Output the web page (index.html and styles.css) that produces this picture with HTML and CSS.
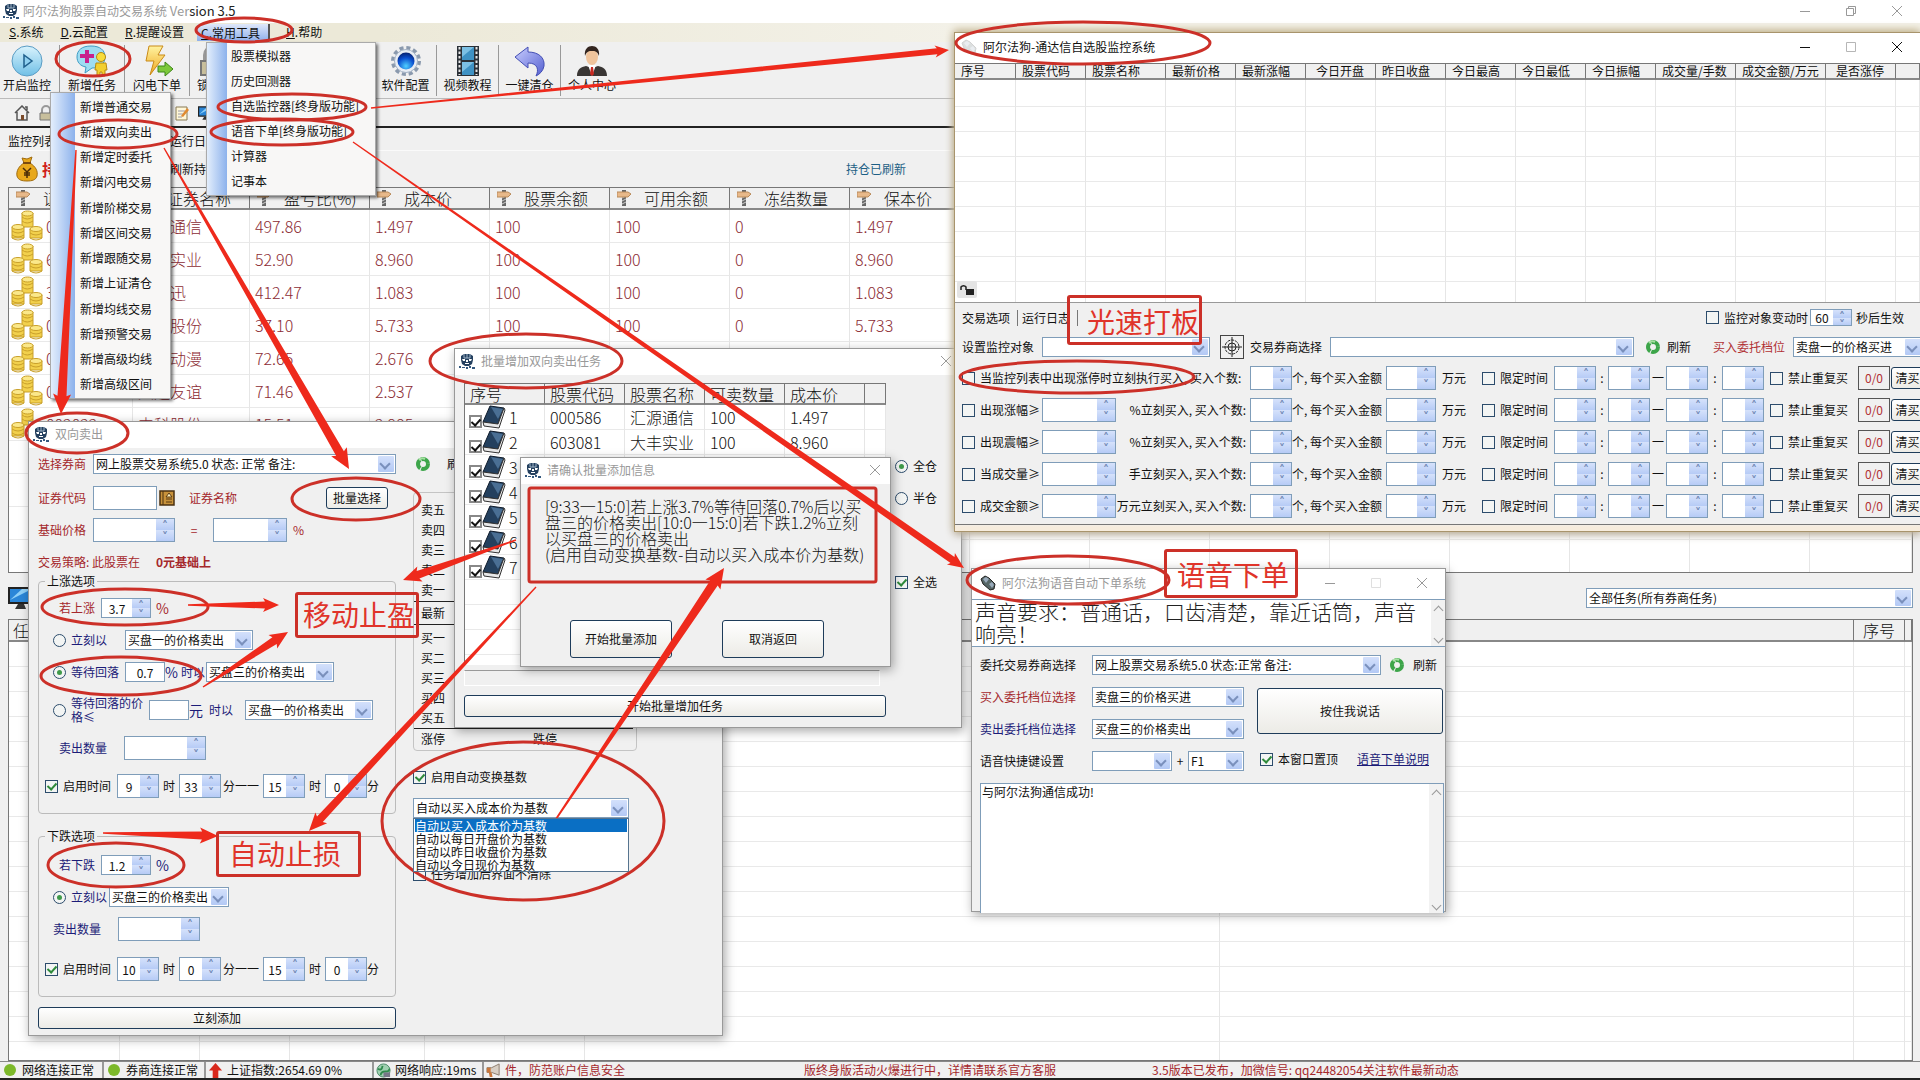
FILE: index.html
```html
<!DOCTYPE html>
<html lang="zh-CN">
<head>
  <meta charset="UTF-8">
  <meta name="viewport" content="width=device-width, initial-scale=1.0">
  <title>阿尔法狗股票自动交易系统</title>
  <link rel="stylesheet" href="styles.css">
</head>
<body>

  <!-- Icônes partagées -->
  <svg width="0" height="0" class="sprite" aria-hidden="true">
    <linearGradient id="gPlay" x1="0" y1="0" x2="0" y2="1"><stop offset="0" stop-color="#d9f3fd"/><stop offset="1" stop-color="#6fbfe6"/></linearGradient>
    <linearGradient id="gBolt" x1="0" y1="0" x2="0" y2="1"><stop offset="0" stop-color="#fff3a0"/><stop offset="1" stop-color="#f0a820"/></linearGradient>
    <radialGradient id="gBall" cx=".5" cy=".8" r=".8"><stop offset="0" stop-color="#4fd0ff"/><stop offset=".6" stop-color="#0a4fd0"/><stop offset="1" stop-color="#06206e"/></radialGradient>
    <linearGradient id="gBack" x1="0" y1="0" x2="1" y2="1"><stop offset="0" stop-color="#c9ceff"/><stop offset="1" stop-color="#5560d0"/></linearGradient>
    <symbol id="logo" viewBox="0 0 16 16"><path d="M2 3l3-2h6l3 2v4l-1 4-3 2H6l-3-2-1-4z" fill="#24405f"/><path d="M5 1v4h6V1M8 1v4" stroke="#9fb4c8" fill="none"/><path d="M3 6h3v2H4zM10 6h3l-1 2h-2zM6 10h4v1H6zM7 7h2v2H7z" fill="#fff"/><path d="M0 13h2v2H0zM3 14h3v1H3zM7 14h2v2H7zM10 13h2v2h-2zM13 14h3v2h-3z" fill="#35597f"/></symbol>
    <symbol id="play" viewBox="0 0 32 32"><circle cx="16" cy="16" r="15" fill="url(#gPlay)" stroke="#5a9cc4"/><path d="M13 10l8 6-8 6z" fill="#8fd0f0" stroke="#1f5f8c" stroke-width="1.5"/></symbol>
    <symbol id="task" viewBox="0 0 32 32"><path d="M15 1c9 0 14 4 14 11s-5 11-13 11l-7 5 1-6C4 21 1 17 1 12 1 5 6 1 15 1z" fill="#9fdcf2" stroke="#3d9cc4"/><path d="M9 5h4v4h5v4h-5v5H9v-5H4V9h5z" fill="#c8208c"/><circle cx="25" cy="12" r="4.500" fill="#f7dc3c" stroke="#b88a10"/><path d="M20 18h10l1 7h-2v6h-3v-4h-2v4h-3v-6h-2z" fill="#f2cf30" stroke="#b88a10"/></symbol>
    <symbol id="bolt" viewBox="0 0 32 32"><path d="M8 1h14l-5 9h7L9 30l4-14H5z" fill="url(#gBolt)" stroke="#c98a18"/><path d="M17 21h7v-4l8 7-8 7v-4h-7z" fill="#7cc83a" stroke="#3d8618"/></symbol>
    <symbol id="gear" viewBox="0 0 32 32"><circle cx="16" cy="16" r="13" fill="none" stroke="#8a99ad" stroke-width="4" stroke-dasharray="4 2.800"/><circle cx="16" cy="16" r="11.500" fill="#e8edf4" stroke="#a4b2c4"/><circle cx="16" cy="16" r="8.500" fill="url(#gBall)"/></symbol>
    <symbol id="film" viewBox="0 0 32 32"><path d="M5 1h22v30H5z" fill="#2b3138"/><path d="M10 2h12v13H10zM10 17h12v13H10z" fill="#3f92c4"/><path d="M10 2h12L10 12zM10 17h12L10 27z" fill="#7cc0e4"/><path d="M7.500 2v28M24.500 2v28" stroke="#e8e8e8" stroke-width="2" stroke-dasharray="2.500 2"/></symbol>
    <symbol id="back" viewBox="0 0 32 32"><path d="M1 12L14 2v5c11 0 17 6 16 14-1 5-4 8-8 10 3-6 2-13-8-13v5z" fill="url(#gBack)" stroke="#444fb4"/></symbol>
    <symbol id="man" viewBox="0 0 32 32"><path d="M1 31c0-7 4-9 9-10l6 2 6-2c5 1 9 3 9 10z" fill="#3a3634"/><path d="M12 20h8l-4 11z" fill="#fff"/><path d="M15 22h2l1 7-2 2-2-2z" fill="#c82820"/><ellipse cx="16" cy="12" rx="6" ry="8" fill="#f0c49c"/><path d="M9 11C8 4 12 1 16 1s8 3 7 10c-2-5-4-5-7-5s-5 0-7 5z" fill="#33251f"/></symbol>
    <symbol id="home" viewBox="0 0 16 16"><path d="M1 8l7-7 7 7M3 7v8h10V7M11 2h2v3" fill="#eee" stroke="#555" stroke-width="1.500"/><path d="M7 10h3v5H7z" fill="#7a4a2a"/></symbol>
    <symbol id="lock" viewBox="0 0 16 16"><path d="M4 8V5a4 4 0 018 0v3" fill="none" stroke="#999" stroke-width="2"/><path d="M2 8h12v7H2z" fill="#c8bf9c" stroke="#777"/></symbol>
    <symbol id="note" viewBox="0 0 16 16"><path d="M2 2h11v13H2z" fill="#fff7d8" stroke="#887a55"/><path d="M4 6h7M4 9h5M4 12h4" stroke="#99a"/><path d="M7 11l6-8 2 2-6 7z" fill="#e08a30"/></symbol>
    <symbol id="screen" viewBox="0 0 26 24"><path d="M1 2h24v15H1z" fill="#2a86d8" stroke="#222" stroke-width="2"/><path d="M2 14L14 3h10z" fill="#8fd0f8"/><path d="M10 18h6l2 5H7z" fill="#333"/></symbol>
    <symbol id="bag" viewBox="0 0 24 26"><path d="M9 7L7 2l5 1 5-2-2 6c6 4 8 8 7 13-1 4-5 5-10 5S3 24 2 20C1 15 4 10 9 7z" fill="#e8a81c" stroke="#a06c10"/><path d="M8 7h8" stroke="#7a4a10" stroke-width="2"/><path d="M8 12l4 4 4-4M12 16v6M9 17h6M9 19h6" stroke="#4a2c08" fill="none" stroke-width="1.500"/></symbol>
    <symbol id="coins" viewBox="0 0 32 32"><g fill="#f2d04c" stroke="#c9a02a"><path d="M11 3v14h11V3z"/><path d="M1 17v11h12V17zM19 19v9h12v-9z"/><ellipse cx="16.500" cy="3.500" rx="5.500" ry="2.500" fill="#fbe88a"/><ellipse cx="7" cy="17" rx="6" ry="2.500" fill="#fbe88a"/><ellipse cx="25" cy="19" rx="6" ry="2.500" fill="#fbe88a"/><path d="M11 7q5 4 11 0M11 11q5 4 11 0M1 21q6 4 12 0M1 25q6 4 12 0M1 28q6 4 12 0M19 23q6 4 12 0M19 28q6 4 12 0" fill="none"/></g></symbol>
    <symbol id="sign" viewBox="0 0 14 18"><path d="M5 1h4v16H5z" fill="#666"/><path d="M5 9l4-2M5 12l4-2M5 15l4-2" stroke="#ccc"/><path d="M0 3h11l3 2-3 3H0z" fill="#e8b98a" stroke="#b98a5a"/></symbol>
    <symbol id="book" viewBox="0 0 24 24"><path d="M8 1l14 2-6 16-15-2z" fill="#24405e" stroke="#101c2c"/><path d="M9 2l12 2-5 10z" fill="#4a6f94"/><path d="M1 17l15 2 6-16 1 2-6 18L2 21z" fill="#e8e8e8" stroke="#333"/></symbol>
    <symbol id="reload" viewBox="0 0 16 16"><circle cx="8" cy="8" r="5" fill="none" stroke="#3da54a" stroke-width="4" stroke-dasharray="9.500 1"/><path d="M4 4a5 5 0 016-1" stroke="#a4e0a0" stroke-width="2" fill="none"/></symbol>
    <symbol id="aim" viewBox="0 0 20 20"><g fill="none" stroke="#222"><circle cx="10" cy="10" r="7" stroke-dasharray="3 1"/><circle cx="10" cy="10" r="4"/><path d="M10 0v20M0 10h20"/></g></symbol>
    <symbol id="mic" viewBox="0 0 16 16"><path d="M1 4l4-3 4 2 6 6-1 5-4 1-7-6z" fill="#566" stroke="#222"/><path d="M3 4l3-2 3 2-3 4zM9 9l3-2 2 3-2 3z" fill="#9ab"/></symbol>
    <symbol id="dial" viewBox="0 0 16 16"><path d="M1 1h14v14H1z" fill="#c8923a" stroke="#4a3010" stroke-width="1.500"/><path d="M4 1v14" stroke="#4a3010"/><path d="M10 3l3 4H7zM7 9h6M7 12h6" fill="#fff2c0" stroke="#5a3a10"/></symbol>
    <symbol id="up" viewBox="0 0 16 16"><path d="M8 0l7 8h-4v8H5V8H1z" fill="#d8281c"/></symbol>
    <symbol id="globe" viewBox="0 0 16 16"><circle cx="8" cy="8" r="7" fill="#9fd0b0" stroke="#4a8a68"/><path d="M2 6q4 3 5-3M5 13q0-4 5-4t4-3" stroke="#2f8a4c" stroke-width="2" fill="none"/><path d="M8 10h7v5H8z" fill="#778"/></symbol>
    <symbol id="horn" viewBox="0 0 16 16"><path d="M1 5h5l8-4v12L6 10H1z" fill="#d8cfc4" stroke="#8a7a6a"/><path d="M1 5h4v5H1zM3 10h3l1 5H4z" fill="#c8763a"/></symbol>
    <symbol id="close" viewBox="0 0 12 12"><path d="M1 1l10 10M11 1L1 11" stroke="currentColor" fill="none"/></symbol>
    <symbol id="min" viewBox="0 0 12 12"><path d="M1 6.500h10" stroke="currentColor"/></symbol>
    <symbol id="max" viewBox="0 0 12 12"><path d="M1.500 1.500h9v9h-9z" stroke="currentColor" fill="none"/></symbol>
    <symbol id="restore" viewBox="0 0 12 12"><path d="M1.500 3.500h7v7h-7zM3.500 3.500v-2h7v7h-2" stroke="currentColor" fill="none"/></symbol>
  </svg>

  <div class="app">
    <header class="titlebar main-title">
      <svg class="i16"><use href="#logo"/></svg>
      <h1>阿尔法狗股票自动交易系统 <span class="ver">Ver<b>sion 3.5</b></span></h1>
      <div class="controls">
        <button aria-label="最小化"><svg><use href="#min"/></svg></button>
        <button aria-label="还原"><svg><use href="#restore"/></svg></button>
        <button aria-label="关闭"><svg><use href="#close"/></svg></button>
      </div>
    </header>

    <nav class="menubar">
      <button><u>S</u>.系统</button>
      <button><u>D</u>.云配置</button>
      <button><u>R</u>.提醒设置</button>
      <button class="active"><u>C</u>.常用工具</button>
      <button><u>H</u>.帮助</button>
    </nav>

    <div class="toolbar">
      <button><svg><use href="#play"/></svg>开启监控</button>
      <button><svg><use href="#task"/></svg>新增任务</button>
      <button><svg><use href="#bolt"/></svg>闪电下单</button>
      <button class="wide"><svg><use href="#lock"/></svg>锁定软件</button>
      <button><svg><use href="#gear"/></svg>软件配置</button>
      <button><svg><use href="#film"/></svg>视频教程</button>
      <button><svg><use href="#back"/></svg>一键清仓</button>
      <button><svg><use href="#man"/></svg>个人中心</button>
    </div>

    <div class="quickbar">
      <svg class="i16"><use href="#home"/></svg>
      <svg class="i16"><use href="#lock"/></svg>
      <svg class="i16 far"><use href="#note"/></svg>
      <svg class="i16"><use href="#screen"/></svg>
    </div>

    <div class="tabline"><span>监控列表</span><span>运行日志</span></div>
    <div class="fundline">
      <svg class="bag"><use href="#bag"/></svg>
      <strong>持仓</strong>
      <span class="refresh-label">刷新持仓</span>
      <span class="state">持仓已刷新</span>
    </div>

    <div class="grid-box holdings"><table id="holdings"></table></div>

    <div class="taskline">
      <svg class="screen"><use href="#screen"/></svg>
      <span class="combo task-filter"><select aria-label="任务筛选"><option>全部任务(所有券商任务)</option></select></span>
    </div>

    <div class="grid-box tasks"><table id="tasks"></table></div>

    <footer class="statusbar">
      <span class="st-cell c1"><i class="dot"></i>网络连接正常</span>
      <span class="st-cell c1"><i class="dot"></i>券商连接正常</span>
      <span class="st-cell c2"><svg class="i16"><use href="#up"/></svg>上证指数:2654.69 0%</span>
      <span class="st-cell c3"><svg class="i16"><use href="#globe"/></svg>网络响应:19ms</span>
      <span class="st-cell news"><svg class="i16"><use href="#horn"/></svg><span class="n1">件，防范账户信息安全</span><span class="n2">版终身版活动火爆进行中，详情请联系官方客服</span><span>3.5版本已发布，加微信号: qq24482054关注软件最新动态</span></span>
    </footer>
  </div>

  <!-- Fenêtre vente bidirectionnelle -->
  <section class="window sell">
    <header class="titlebar"><svg class="i16"><use href="#logo"/></svg><h2>双向卖出</h2></header>
    <div class="sell-body">
      <div class="sell-left">
        <div class="row red">
          <label class="lab" for="broker">选择券商</label>
          <span class="combo fill"><select id="broker"><option>网上股票交易系统5.0 状态: 正常 备注:</option></select></span>
        </div>
        <div class="row red gap-top">
          <label class="lab" for="code">证券代码</label>
          <input class="box tall w64" id="code">
          <svg class="i16 dial"><use href="#dial"/></svg>
          <span>证券名称</span>
          <button class="btn pick">批量选择</button>
        </div>
        <div class="row red">
          <label class="lab" for="price">基础价格</label>
          <span class="spin tall w82"><input id="price"></span>
          <span class="eq">=</span>
          <span class="spin tall w74"><input aria-label="百分比"></span>
          <span class="pct-s">%</span>
        </div>
        <div class="row red"><span>交易策略: 此股票在</span><b class="strategy">0元基础上</b></div>

        <fieldset>
          <legend>上涨选项</legend>
          <div class="row red ind2"><label class="lab-s" for="rise">若上涨</label><span class="spin w50"><input id="rise" value="3.7"></span><span class="pct">%</span></div>
          <div class="row navy ind1">
            <label class="opt lab-r"><input type="radio" name="up">立刻以</label>
            <span class="combo w128"><select aria-label="卖出价格"><option>买盘一的价格卖出</option></select></span>
          </div>
          <div class="row navy ind1">
            <label class="opt lab-r"><input type="radio" name="up" checked>等待回落</label>
            <input class="box w40" value="0.7" aria-label="回落">
            <span class="pct near">%</span><span class="when">时以</span>
            <span class="combo w128"><select aria-label="回落卖出价格"><option>买盘三的价格卖出</option></select></span>
          </div>
          <div class="row two navy ind1">
            <label class="opt lab-l"><input type="radio" name="up"><span>等待回落的价格≤</span></label>
            <input class="box w40" aria-label="价格">
            <span class="yuan">元</span><span class="when2">时以</span>
            <span class="combo w128"><select aria-label="到价卖出价格"><option>买盘一的价格卖出</option></select></span>
          </div>
          <div class="row navy ind2"><label class="lab-m" for="qty1">卖出数量</label><span class="spin tall w82"><input id="qty1"></span></div>
          <div class="row time">
            <label class="opt"><input type="checkbox" checked>启用时间</label>
            <span class="spin tall w42"><input value="9" aria-label="开始时"></span><span>时</span>
            <span class="spin tall w42"><input value="33" aria-label="开始分"></span><span class="dash">分一一</span>
            <span class="spin tall w42"><input value="15" aria-label="结束时"></span><span>时</span>
            <span class="spin tall w42"><input value="0" aria-label="结束分"></span><span class="end">分</span>
          </div>
        </fieldset>

        <fieldset>
          <legend>下跌选项</legend>
          <div class="row red navy ind2"><label class="lab-s" for="fall">若下跌</label><span class="spin w50"><input id="fall" value="1.2"></span><span class="pct">%</span></div>
          <div class="row navy ind1">
            <label class="opt lab-n"><input type="radio" name="down" checked>立刻以</label>
            <span class="combo w120"><select aria-label="止损卖出价格"><option>买盘三的价格卖出</option></select></span>
          </div>
          <div class="row navy ind1"><label class="lab-m" for="qty2">卖出数量</label><span class="spin tall w82"><input id="qty2"></span></div>
          <div class="row time">
            <label class="opt"><input type="checkbox" checked>启用时间</label>
            <span class="spin tall w42"><input value="10" aria-label="开始时"></span><span>时</span>
            <span class="spin tall w42"><input value="0" aria-label="开始分"></span><span class="dash">分一一</span>
            <span class="spin tall w42"><input value="15" aria-label="结束时"></span><span>时</span>
            <span class="spin tall w42"><input value="0" aria-label="结束分"></span><span class="end">分</span>
          </div>
        </fieldset>
        <button class="btn full">立刻添加</button>
      </div>

      <div class="sell-right">
        <div class="row reload"><svg class="i16"><use href="#reload"/></svg><span>刷新</span></div>
        <ul class="quotes">
          <li>卖五</li><li>卖四</li><li>卖三</li><li>卖二</li><li>卖一</li>
          <li class="last">最新</li>
          <li>买一</li><li>买二</li><li>买三</li><li>买四</li><li>买五</li>
          <li class="limit"><span>涨停</span><span>跌停</span></li>
        </ul>
        <div class="row auto"><label class="opt"><input type="checkbox" checked>启用自动变换基数</label></div>
        <div class="base">
          <span class="combo w216"><select aria-label="基数"><option>自动以买入成本价为基数</option></select></span>
          <ul class="base-list">
            <li class="on">自动以买入成本价为基数</li>
            <li>自动以每日开盘价为基数</li>
            <li>自动以昨日收盘价为基数</li>
            <li>自动以今日现价为基数</li>
          </ul>
        </div>
        <div class="row keep"><label class="opt"><input type="checkbox">任务增加后界面不清除</label></div>
      </div>
    </div>
  </section>

  <!-- Ajout par lot -->
  <section class="window batch">
    <header class="titlebar"><svg class="i16"><use href="#logo"/></svg><h2>批量增加双向卖出任务</h2>
      <div class="controls"><button aria-label="关闭"><svg><use href="#close"/></svg></button></div></header>
    <div class="batch-body">
      <div class="batch-main">
        <div class="batch-list"><table id="batch"></table></div>
        <div class="strip"></div>
        <button class="btn full">开始批量增加任务</button>
      </div>
      <div class="batch-side">
        <label class="opt"><input type="radio" name="pos" checked>全仓</label>
        <label class="opt"><input type="radio" name="pos">半仓</label>
        <label class="opt all"><input type="checkbox" checked>全选</label>
      </div>
    </div>
  </section>

  <section class="window confirm">
    <header class="titlebar"><svg class="i16"><use href="#logo"/></svg><h2>请确认批量添加信息</h2>
      <div class="controls"><button aria-label="关闭"><svg><use href="#close"/></svg></button></div></header>
    <p>[9:33一15:0]若上涨3.7%等待回落0.7%后以买<br>盘三的价格卖出[10:0一15:0]若下跌1.2%立刻<br>以买盘三的价格卖出<br>(启用自动变换基数-自动以买入成本价为基数)</p>
    <div class="actions"><button class="btn">开始批量添加</button><button class="btn">取消返回</button></div>
  </section>

  <!-- Moniteur de valeurs -->
  <section class="window monitor">
    <header class="titlebar"><svg class="i16 faint"><use href="#mic"/></svg><h2>阿尔法狗-通达信自选股监控系统</h2>
      <div class="controls">
        <button aria-label="最小化"><svg><use href="#min"/></svg></button>
        <button class="off" aria-label="最大化"><svg><use href="#max"/></svg></button>
        <button aria-label="关闭"><svg><use href="#close"/></svg></button>
      </div></header>
    <div class="watch"><table id="watch"></table>
      <button class="unlock" aria-label="解锁"><svg viewBox="0 0 14 12"><path d="M1 6V3a3 3 0 015 0v3" fill="none" stroke="#222" stroke-width="1.500"/><path d="M6 5h8v6H6z" fill="#222"/></svg></button>
    </div>
    <div class="options">
      <div class="mon-tabs">
        <span class="tab">交易选项</span><span class="tab low">运行日志</span>
        <label class="opt"><input type="checkbox">监控对象变动时</label>
        <span class="spin small w42"><input value="60" aria-label="秒"></span><span class="sec">秒后生效</span>
      </div>
      <div class="mon-target">
        <label class="l1" for="target">设置监控对象</label><span class="combo c168"><select id="target"></select></span>
        <button class="aim" aria-label="定位"><svg><use href="#aim"/></svg></button>
        <label class="l2" for="mbroker">交易券商选择</label><span class="combo c304"><select id="mbroker"></select></span>
        <svg class="i16 rl"><use href="#reload"/></svg><span class="l3">刷新</span>
        <label class="l4" for="level">买入委托档位</label><span class="combo c130"><select id="level"><option>卖盘一的价格买进</option></select></span>
      </div>
      <div id="rules"></div>
    </div>
  </section>

  <!-- Commande vocale -->
  <section class="window voice">
    <header class="titlebar"><svg class="i16"><use href="#mic"/></svg><h2>阿尔法狗语音自动下单系统</h2>
      <div class="controls">
        <button aria-label="最小化"><svg><use href="#min"/></svg></button>
        <button class="off" aria-label="最大化"><svg><use href="#max"/></svg></button>
        <button aria-label="关闭"><svg><use href="#close"/></svg></button>
      </div></header>
    <div class="speak"><p>声音要求：普通话，口齿清楚，靠近话筒，声音响亮！</p><span class="scroll"></span></div>
    <div class="voice-form">
      <label for="vb">委托交易券商选择</label>
      <div class="v-broker"><span class="combo fill"><select id="vb"><option>网上股票交易系统5.0 状态:正常 备注:</option></select></span><svg class="i16"><use href="#reload"/></svg><span>刷新</span></div>
      <label class="red" for="vbuy">买入委托档位选择</label>
      <span class="combo"><select id="vbuy"><option>卖盘三的价格买进</option></select></span>
      <button class="btn talk">按住我说话</button>
      <label class="navy" for="vsell">卖出委托档位选择</label>
      <span class="combo"><select id="vsell"><option>买盘三的价格卖出</option></select></span>
      <label for="vkey">语音快捷键设置</label>
      <div class="keys"><span class="combo w80"><select id="vkey"></select></span>+<span class="combo w56"><select aria-label="功能键"><option>F1</option></select></span></div>
      <div class="v-top"><label class="opt"><input type="checkbox" checked>本窗口置顶</label><a href="#">语音下单说明</a></div>
    </div>
    <div class="log"><textarea aria-label="日志">与阿尔法狗通信成功!</textarea><span class="scroll"></span></div>
  </section>

  <!-- Menus déroulés -->
  <div class="menu menu-task">
    <button>新增普通交易</button><button>新增双向卖出</button><button>新增定时委托</button><button>新增闪电交易</button>
    <button>新增阶梯交易</button><button>新增区间交易</button><button>新增跟随交易</button><button>新增上证清仓</button>
    <button>新增均线交易</button><button>新增预警交易</button><button>新增高级均线</button><button>新增高级区间</button>
  </div>
  <div class="menu menu-tools">
    <button>股票模拟器</button><button>历史回测器</button><button>自选监控器[终身版功能]</button>
    <button>语音下单[终身版功能]</button><button>计算器</button><button>记事本</button>
  </div>

  <!-- Annotations rouges -->
  <svg class="marks" id="marks" width="1920" height="1080" aria-hidden="true">
    <ellipse cx="244" cy="30" rx="48" ry="12"/>
    <ellipse cx="93" cy="59" rx="37" ry="17"/>
    <ellipse cx="118" cy="134" rx="59" ry="14"/>
    <ellipse cx="292" cy="107" rx="74" ry="13"/>
    <ellipse cx="282" cy="132" rx="71" ry="13"/>
    <ellipse cx="77" cy="433" rx="51" ry="20"/>
    <ellipse cx="356" cy="499" rx="64" ry="21"/>
    <ellipse cx="125" cy="607" rx="83" ry="18"/>
    <ellipse cx="121" cy="676" rx="80" ry="19"/>
    <ellipse cx="116" cy="865" rx="68" ry="22"/>
    <ellipse cx="526" cy="361" rx="96" ry="27"/>
    <ellipse cx="523" cy="821" rx="141" ry="79"/>
    <ellipse cx="1083" cy="43" rx="127" ry="21"/>
    <ellipse cx="1077" cy="377" rx="117" ry="16"/>
    <ellipse cx="1068" cy="580" rx="101" ry="24"/>
    <rect x="529" y="488" width="347" height="94" rx="2"/>
  </svg>
  <div class="tag tag-profit">移动止盈</div>
  <div class="tag tag-loss">自动止损</div>
  <div class="tag tag-fast">光速打板</div>
  <div class="tag tag-voice">语音下单</div>

  <script src="script.js"></script>
</body>
</html>
```
FILE: styles.css
```css
* {
  box-sizing: border-box;
}
body {
  margin: 0;
  position: relative;
  height: 100vh;
  overflow: hidden;
  background: #f0f0f0;
  color: #111;
  font: 12px/16px "Noto Sans CJK SC", sans-serif;
}
button, input, select, textarea {
  font: inherit;
  color: inherit;
  margin: 0;
}
button {
  border: 0;
  background: none;
  padding: 0;
  white-space: nowrap;
}
ul {
  list-style: none;
  margin: 0;
  padding: 0;
}
h1, h2, p {
  margin: 0;
  font-size: 12px;
  font-weight: normal;
}
svg {
  display: block;
  flex: none;
}
.sprite {
  position: absolute;
}
.i16 {
  width: 16px;
  height: 16px;
}
.red {
  color: #a5282c;
}
.navy, .navy .pct {
  color: #1c1c78;
}
.red.navy .lab-s {
  color: #1c1c78;
}

/* Fenêtre principale */
.app {
  height: 100vh;
  display: flex;
  flex-direction: column;
  border-bottom: 2px solid #222;
}
.titlebar {
  display: flex;
  align-items: center;
  gap: 6px;
  background: #fff;
  color: #999;
  white-space: nowrap;
}
.controls {
  margin-left: auto;
  display: flex;
}
.controls button {
  width: 46px;
  height: 20px;
  display: grid;
  place-items: center;
}
.controls svg {
  width: 12px;
  height: 12px;
}
.controls .off {
  opacity: 0.3;
}
.main-title {
  height: 23px;
  flex: none;
  padding: 0 0 2px 3px;
  gap: 4px;
}
.ver b {
  font-weight: normal;
  color: #222;
}
.ver {
  font-size: 13px;
}
.menubar {
  height: 19px;
  flex: none;
  display: flex;
  padding: 0 0 1px 9px;
  gap: 17px;
  background: linear-gradient(90deg, #ece9d8 380px, #f3f1e8 960px);
}
.menubar .active {
  margin: 1px -1px 0 -4px;
  padding: 0 8px 0 4px;
  background: linear-gradient(#dfe8fa, #8fb0ea);
  border-right: 2px solid #555;
}
.toolbar {
  height: 57px;
  flex: none;
  display: flex;
  padding: 3px 0 2px;
  border-bottom: 1px solid #bbb;
}
.toolbar button {
  width: 62px;
  border-right: 1px solid #999;
  display: flex;
  flex-direction: column;
  align-items: center;
}
.toolbar button:nth-child(-n+3) {
  width: 65px;
}
.toolbar button:first-child {
  width: 60px;
  padding-right: 5px;
}
.toolbar .wide {
  width: 185px;
  align-items: flex-start;
  padding-left: 7px;
}
.toolbar button:last-child {
  border: 0;
}
.toolbar svg {
  width: 32px;
  height: 32px;
}
.quickbar {
  height: 29px;
  flex: none;
  display: flex;
  align-items: center;
  gap: 8px;
  padding-left: 14px;
  border-bottom: 2px solid #222;
}
.quickbar .far {
  margin-left: 112px;
}
.tabline {
  height: 23px;
  flex: none;
  display: flex;
  gap: 114px;
  padding: 5px 8px 0;
  border-bottom: 1px solid #fafafa;
}
.fundline {
  height: 36px;
  flex: none;
  display: flex;
  align-items: center;
  padding-left: 15px;
}
.bag {
  width: 24px;
  height: 26px;
}
.fundline strong {
  font-size: 16px;
  color: #d02018;
  margin-left: 3px;
  width: 128px;
}
.refresh-label {
  width: 676px;
}
.state {
  color: #1d5f85;
}
.grid-box {
  flex: 386 1 0;
  min-height: 0;
  overflow: hidden;
  margin: 0 7px 0 8px;
  background: #fff;
  border: 1px solid #777;
}
table {
  border-collapse: separate;
  border-spacing: 0;
  table-layout: fixed;
}
.grid-box table {
  width: 100%;
  font-size: 16px;
  font-weight: 300;
  line-height: 20px;
}
th {
  font-weight: inherit;
  text-align: left;
  background: #f0f0f0;
  border-right: 1px solid #777;
  border-bottom: 2px solid #888;
  padding: 0;
  white-space: nowrap;
}
td {
  border-right: 1px solid #e6e6e6;
  border-bottom: 1px solid #e9e9e9;
  padding: 0;
  white-space: nowrap;
}
.holdings th {
  height: 22px;
}
.holdings th div {
  display: flex;
  align-items: center;
  gap: 13px;
  padding-left: 7px;
  height: 19px;
}
.holdings th svg {
  width: 14px;
  height: 18px;
}
.holdings td {
  height: 33px;
  padding-left: 5px;
  color: #8c2c34;
}
.holdings td div {
  display: flex;
  align-items: center;
  gap: 3px;
  margin-left: -3px;
}
.holdings td svg {
  width: 32px;
  height: 32px;
}
.taskline {
  height: 46px;
  flex: none;
  display: flex;
  justify-content: space-between;
  align-items: center;
  padding: 4px 7px 0 8px;
}
.screen {
  width: 26px;
  height: 26px;
}
.task-filter {
  width: 327px;
}
.tasks {
  flex-grow: 443;
}
.tasks th {
  height: 22px;
  padding-left: 4px;
}
.tasks th:nth-child(9) {
  padding-left: 9px;
}
.tasks td {
  height: 25px;
}
.statusbar {
  height: 17px;
  flex: none;
  display: flex;
  border-top: 1px solid #888;
  white-space: nowrap;
}
.st-cell {
  display: flex;
  align-items: center;
  gap: 4px;
  padding-left: 2px;
  border-left: 2px solid #999;
}
.st-cell:first-child {
  border: 0;
}
.st-cell .i16 {
  width: 15px;
  height: 15px;
}
.dot {
  width: 12px;
  height: 12px;
  border-radius: 50%;
  background: #7cb82a;
  margin: 0 2px;
}
.c1 {
  width: 102px;
}
.c2 {
  width: 168px;
}
.c3 {
  width: 110px;
}
.news {
  color: #a5282c;
  flex: 1;
}
.n1 {
  width: 295px;
}
.n2 {
  width: 344px;
}

/* Contrôles */
.combo {
  position: relative;
  display: inline-flex;
  height: 20px;
  border: 1px solid #7f9db9;
  background: #fff;
  color: #111;
  flex: none;
}
.combo select {
  appearance: none;
  border: 0;
  background: none;
  width: 100%;
  height: 18px;
  padding: 0 18px 0 2px;
}
.combo::before {
  content: "";
  position: absolute;
  right: 1px;
  top: 1px;
  bottom: 1px;
  width: 16px;
  background: linear-gradient(#d3e0fb, #b3c9f5);
  border-radius: 1px;
}
.combo::after {
  content: "";
  position: absolute;
  right: 6px;
  top: 5px;
  width: 6px;
  height: 6px;
  border: solid #7a90bc;
  border-width: 0 2px 2px 0;
  transform: rotate(45deg);
}
.combo.fill {
  flex: 1;
}
.spin {
  display: inline-grid;
  grid-template: 1fr 1fr / 1fr 18px;
  height: 20px;
  border: 1px solid #7f9db9;
  background: #fff;
  color: #111;
  flex: none;
}
.spin input {
  grid-area: 1 / 1 / 3 / 2;
  border: 0;
  background: none;
  width: 100%;
  min-width: 0;
  padding: 0;
  height: 100%;
  text-align: center;
}
.spin::before, .spin::after {
  content: "˄";
  grid-area: 1 / 2;
  min-height: 0;
  background: linear-gradient(#d6e2fb, #b6cbf6);
  color: #7088b4;
  font: bold 12px/15px "DejaVu Sans", sans-serif;
  text-align: center;
  overflow: hidden;
}
.spin::after {
  content: "˅";
  grid-area: 2 / 2;
}
.tall {
  height: 24px;
}
.spin.small {
  height: 17px;
}
.box {
  height: 20px;
  border: 1px solid #7f9db9;
  background: #fff;
  color: #111;
  text-align: center;
  padding: 0;
}
.box.tall {
  height: 24px;
}
.w40 { width: 40px; }
.w42 { width: 42px; }
.w50 { width: 50px; }
.w56 { width: 56px; }
.w64 { width: 64px; }
.w74 { width: 74px; }
.w80 { width: 80px; }
.w82 { width: 82px; }
.w120 { width: 120px; }
.w128 { width: 128px; }
.w216 { width: 216px; }
.opt {
  display: inline-flex;
  align-items: center;
  gap: 5px;
  white-space: nowrap;
}
input[type="checkbox"], input[type="radio"] {
  appearance: none;
  width: 13px;
  height: 13px;
  flex: none;
  border: 1px solid #2c4c6c;
  background: #f3f5f4;
  display: grid;
  place-items: center;
}
input[type="radio"] {
  border-radius: 50%;
}
input[type="radio"]:checked::before {
  content: "";
  width: 5px;
  height: 5px;
  border-radius: 50%;
  background: #3f9a4a;
}
input[type="checkbox"]:checked::before {
  content: "";
  width: 4px;
  height: 7px;
  margin-bottom: 2px;
  border: solid #2e8a3a;
  border-width: 0 2px 2px 0;
  transform: rotate(42deg);
}
.btn {
  height: 22px;
  border: 1px solid #1e3c5a;
  border-radius: 3px;
  background: linear-gradient(#fff, #ecebe6);
  color: #111;
}

/* Fenêtres */
.window {
  position: absolute;
  background: #f0f0f0;
  border: 1px solid #999;
  box-shadow: 2px 3px 10px rgba(0, 0, 0, 0.35);
}
.window .titlebar {
  height: 26px;
  padding: 0 0 2px 4px;
}
.row {
  height: 32px;
  display: flex;
  align-items: center;
  white-space: nowrap;
}
.sell {
  left: 28px;
  top: 421px;
  width: 695px;
}
.sell-body {
  display: grid;
  grid-template-columns: 358px 1fr;
  column-gap: 17px;
  padding: 0 9px 6px;
}
.gap-top {
  margin-top: 2px;
}
.lab {
  width: 55px;
}
.dial {
  margin: 0 14px 0 2px;
}
.pick {
  width: 62px;
  margin-left: 89px;
}
.eq {
  width: 38px;
  text-align: center;
}
.pct-s {
  margin-left: 6px;
}
.strategy {
  margin-left: 16px;
}
fieldset {
  margin: -4px 0 15px;
  padding: 4px 6px 11px;
  border: 1px solid #bbb;
  border-radius: 4px;
}
fieldset + fieldset {
  margin: 0 0 10px;
  padding-top: 6px;
}
fieldset + fieldset .time {
  margin-top: 8px;
}
legend {
  padding: 0 2px;
  height: 14px;
  line-height: 14px;
}
.ind1 {
  padding-left: 8px;
}
.ind2 {
  padding-left: 14px;
}
.lab-s {
  width: 42px;
}
.lab-n {
  width: 56px;
}
.lab-m {
  width: 65px;
}
.lab-r {
  width: 72px;
}
.lab-l {
  width: 96px;
}
.lab-l span {
  white-space: normal;
  line-height: 14px;
}
.row.two {
  height: 44px;
}
.pct {
  font-size: 14px;
  margin-left: 5px;
  color: #a5282c;
}
.near {
  margin-left: 0;
  width: 16px;
}
.when {
  width: 25px;
}
.yuan {
  font-size: 14px;
  width: 20px;
}
.when2 {
  width: 36px;
}
.time {
  margin-top: 6px;
  gap: 4px;
}
.time .opt {
  width: 68px;
}
.time .dash {
  margin-left: -2px;
  width: 36px;
}
.time .end {
  margin-left: -4px;
}
.full {
  display: block;
  width: 100%;
}
.reload {
  gap: 16px;
  padding-left: 2px;
}
.quotes {
  width: 224px;
  height: 259px;
  margin-top: 12px;
  padding: 7px 3px 0 0;
  border: 1px solid #c4c4c4;
  border-radius: 4px;
}
.quotes li {
  height: 20px;
  line-height: 20px;
  padding-left: 7px;
}
.quotes .last {
  height: 24px;
  line-height: 22px;
  border: solid #222;
  border-width: 1px 0;
  margin: 1px 0 3px;
}
.quotes .limit {
  border-top: 1px solid #222;
  display: flex;
  gap: 88px;
}
.auto {
  margin-top: 10px;
}
.base {
  position: relative;
  margin-top: 5px;
  height: 20px;
}
.base-list {
  position: absolute;
  left: 0;
  top: 20px;
  width: 216px;
  background: #fff;
  border: 1px solid #56748f;
  padding: 0 1px;
  z-index: 1;
}
.base-list li {
  height: 13px;
  line-height: 13px;
}
.base-list .on {
  background: #0a6fc4;
  color: #fff;
}
.keep {
  margin-top: 40px;
}

.batch {
  left: 454px;
  top: 348px;
  width: 508px;
  height: 380px;
}
.batch .controls button, .confirm .controls button {
  width: 30px;
}
.batch-body {
  display: flex;
  padding: 8px 0 0 9px;
  gap: 9px;
}
.batch-main {
  width: 422px;
}
.batch-list {
  height: 282px;
  overflow: hidden;
  background: #fff;
  border: solid #777;
  border-width: 1px 0 0 1px;
}
.batch table {
  width: 100%;
  font-size: 16px;
  font-weight: 300;
}
.batch th {
  height: 21px;
  line-height: 18px;
  padding-left: 5px;
}
.batch td {
  height: 25px;
  padding-left: 5px;
}
.batch td label {
  display: flex;
  align-items: center;
  margin-left: -1px;
}
.batch td svg {
  width: 24px;
  height: 24px;
  margin-right: 3px;
}
.batch td input {
  border: 2px solid #888;
  background: #fff;
  margin-top: 8px;
}
.batch td input:checked::before {
  border-color: #111;
}
.strip {
  height: 16px;
  margin: 5px 6px 9px 0;
  border: 1px solid #fff;
  border-top-color: #999;
}
.batch-side {
  display: flex;
  flex-direction: column;
  padding-top: 67px;
}
.batch-side .opt {
  height: 32px;
}
.batch-side .all {
  margin-top: 52px;
}

.confirm {
  left: 520px;
  top: 457px;
  width: 371px;
  height: 210px;
}
.confirm p {
  font-size: 16px;
  font-weight: 300;
  line-height: 16px;
  white-space: nowrap;
  padding: 14px 0 0 24px;
}
.actions {
  display: flex;
  gap: 50px;
  padding: 58px 0 0 49px;
}
.actions .btn {
  width: 102px;
  height: 38px;
}

.monitor {
  left: 954px;
  top: 32px;
  right: 0;
  overflow: hidden;
  border: 1px solid #a8946c;
  border-right: 0;
  background: linear-gradient(#f0f0f0 490px, #f6ecdd 494px);
  box-shadow: 0 -2px 8px #c4b48c, 0 3px 8px #b8b0a4;
}
.monitor .titlebar {
  height: 30px;
  padding-left: 6px;
  color: #111;
}
.faint {
  opacity: 0.2;
}
.watch {
  position: relative;
  height: 240px;
  overflow: hidden;
  background: #fff;
  border-top: 1px solid #777;
  border-bottom: 1px solid #999;
}
.watch table {
  width: 100%;
}
.watch th {
  height: 16px;
  line-height: 14px;
  padding: 0 0 0 6px;
}
.watch th:nth-child(6), .watch th:nth-child(13) {
  padding-left: 10px;
}
.watch td {
  height: 25px;
}
.watch tr:first-child td {
  height: 27px;
}
.unlock {
  position: absolute;
  left: 2px;
  bottom: 4px;
  width: 20px;
  height: 17px;
  display: grid;
  place-items: center;
  background: #e4e4e4;
  border-radius: 2px;
}
.unlock svg {
  width: 14px;
  height: 12px;
}
.options {
  height: 222px;
  border-bottom: 1px solid #777;
  margin-bottom: 6px;
  padding-left: 7px;
}
.mon-tabs {
  height: 29px;
  display: flex;
  align-items: center;
}
.tab {
  width: 56px;
  border-right: 1px solid #777;
  margin-right: 4px;
}
.mon-tabs .opt {
  margin-left: 624px;
  width: 104px;
}
.sec {
  margin-left: 4px;
}
.mon-target {
  height: 30px;
  display: flex;
  align-items: center;
  white-space: nowrap;
}
.mon-target > * {
  flex: none;
}
.l1 { width: 80px; }
.l2 { width: 80px; }
.l3 { width: 46px; }
.l4 { width: 80px; color: #b03034; }
.c168 { width: 168px; }
.c304 { width: 304px; }
.c130 { width: 130px; }
.aim {
  width: 24px;
  height: 24px;
  margin: 0 6px 0 10px;
  border: 1px solid #444;
  display: grid;
  place-items: center;
}
.aim svg {
  width: 20px;
  height: 20px;
}
.rl {
  margin: 0 6px 0 11px;
}
.rule {
  height: 32px;
  display: grid;
  grid-template-columns: 288px 42px 94px 50px 46px 72px 42px 12px 42px 16px 42px 14px 42px 6px 88px 32px 34px;
  align-items: center;
  white-space: nowrap;
}
.rule .lead {
  display: flex;
  align-items: center;
}
.lead .opt {
  width: 80px;
}
.lead .tail {
  flex: 1;
  text-align: right;
  padding-right: 4px;
}
.rule .mid {
  text-align: center;
}
.rule .wan {
  padding-left: 6px;
}
.count {
  height: 24px;
  line-height: 22px;
  text-align: center;
  border: 1px solid #555;
  color: #b03034;
}
.rule .btn {
  margin-left: 1px;
}

.voice {
  left: 971px;
  top: 568px;
  width: 475px;
  height: 344px;
}
.voice .titlebar {
  height: 30px;
  padding-left: 8px;
}
.speak {
  height: 48px;
  border: solid #7f9db9;
  border-width: 1px 0;
  background: #fff;
  display: flex;
}
.speak p {
  flex: 1;
  font-size: 21px;
  font-weight: 300;
  line-height: 22px;
  padding: 0 8px 0 3px;
  color: #222;
}
.scroll {
  width: 14px;
  background: #f2f2f2;
  display: flex;
  flex-direction: column;
  justify-content: space-between;
  align-items: center;
  padding: 7px 0 4px;
}
.scroll::before, .scroll::after {
  content: "";
  width: 6px;
  height: 6px;
  border: solid #999;
  border-width: 1px 0 0 1px;
  transform: rotate(45deg);
}
.scroll::after {
  transform: rotate(225deg);
}
.voice-form {
  display: grid;
  grid-template-columns: 112px 152px 1fr;
  grid-auto-rows: 32px;
  align-items: center;
  padding: 2px 2px 0 8px;
}
.v-broker {
  grid-column: 2 / 4;
  display: flex;
  align-items: center;
  gap: 8px;
  padding-right: 6px;
}
.talk {
  grid-area: 2 / 3 / 4 / 4;
  height: 46px;
  margin: 0 0 4px 13px;
}
.keys {
  display: flex;
  justify-content: space-between;
  align-items: center;
}
.v-top {
  display: flex;
  justify-content: space-between;
  padding: 0 14px 4px 16px;
}
.v-top a {
  color: #1c1c78;
}
.log {
  height: 130px;
  margin: 6px 1px 0 8px;
  border: 1px solid #7f9db9;
  border-bottom: 0;
  display: flex;
  background: #fff;
}
.log textarea {
  flex: 1;
  border: 0;
  resize: none;
  padding: 0 1px;
  outline: none;
  overflow: hidden;
}

/* Menus */
.menu {
  position: absolute;
  display: flex;
  flex-direction: column;
  justify-content: space-between;
  border: 1px solid #aaa;
  box-shadow: 2px 2px 3px rgba(0, 0, 0, 0.55);
  background: linear-gradient(90deg, #e3eefc, #8db2ec 24px, #f8f7f6 24px);
}
.menu button {
  height: 25px;
  text-align: left;
}
.menu-task {
  left: 50px;
  top: 92px;
  width: 121px;
  height: 307px;
  padding: 1px 0 1px 29px;
}
.menu-tools {
  left: 206px;
  top: 42px;
  width: 170px;
  height: 154px;
  padding: 0 0 1px 24px;
  background: linear-gradient(90deg, #e3eefc, #8db2ec 20px, #f8f7f6 20px);
}

/* Annotations */
.marks {
  position: absolute;
  left: 0;
  top: 0;
  pointer-events: none;
}
.marks ellipse, .marks rect {
  fill: none;
  stroke: #cc3028;
  stroke-width: 3px;
}
.marks polygon {
  fill: #ee2a1c;
}
.tag {
  position: absolute;
  border: 3px solid #cc3028;
  border-radius: 3px;
  color: #e0342a;
  font-size: 28px;
  line-height: 38px;
  white-space: nowrap;
}
.tag-profit {
  left: 295px;
  top: 592px;
  width: 124px;
  height: 46px;
  padding-left: 5px;
}
.tag-loss {
  left: 216px;
  top: 831px;
  width: 145px;
  height: 46px;
  padding-left: 10px;
}
.tag-fast {
  left: 1067px;
  top: 295px;
  width: 135px;
  height: 50px;
  line-height: 46px;
  padding-left: 17px;
}
.tag-voice {
  left: 1164px;
  top: 549px;
  width: 134px;
  height: 49px;
  line-height: 44px;
  padding-left: 10px;
}
```
FILE: script.js
```javascript
const icon = (name) => `<svg><use href="#${name}"/></svg>`;
const cols = (list) => '<colgroup>' + list.map((w) => w ? `<col style="width:${w}px">` : '<col>').join('') + '</colgroup>';
const blank = (n) => '<td></td>'.repeat(n);

// Positions détenues
const heads = ['证券代码', '证券名称', '盈亏比(%)', '成本价', '股票余额', '可用余额', '冻结数量', '保本价'];
const stocks = [
  ['000586', '汇源通信', '497.86', '1.497'],
  ['603081', '大丰实业', '52.90', '8.960'],
  ['300130', '光环迅', '412.47', '1.083'],
  ['002356', '赫美股份', '37.10', '5.733'],
  ['002292', '奥飞动漫', '72.65', '2.676'],
  ['000679', '大连友谊', '71.46', '2.537'],
  ['002022', '中科股份', '15.51', '2.985']
];
let html = cols([124, 117, 120, 120, 120, 120, 120, 120, 120, 120, 120, 120, 120, 120, 120, 0]) + '<thead><tr>';
heads.forEach((h) => { html += `<th><div>${icon('sign')}${h}</div></th>`; });
html += '<th></th>'.repeat(8) + '</tr></thead><tbody>';
stocks.forEach(([code, name, rate, cost]) => {
  html += `<tr><td><div>${icon('coins')}${code}</div></td><td>${name}</td><td>${rate}</td><td>${cost}</td><td>100</td><td>100</td><td>0</td><td>${cost}</td>${blank(8)}</tr>`;
});
html += `<tr>${blank(16)}</tr>`.repeat(5) + '</tbody>';
document.getElementById('holdings').innerHTML = html;

// Liste des tâches
document.getElementById('tasks').innerHTML = cols([111, 80, 90, 135, 80, 80, 635, 634, 51, 0]) +
  '<thead><tr><th>任务</th>' + '<th></th>'.repeat(7) + '<th>序号</th><th></th></tr></thead><tbody>' +
  `<tr>${blank(10)}</tr>`.repeat(18) + '</tbody>';

// Ajout par lot
html = cols([80, 80, 80, 80, 80, 0]) + '<thead><tr><th>序号</th><th>股票代码</th><th>股票名称</th><th>可卖数量</th><th>成本价</th><th></th></tr></thead><tbody>';
for (let i = 0; i < 11; i++) {
  const s = stocks[i];
  html += i < 7
    ? `<tr><td><label><input type="checkbox" checked>${icon('book')}${i + 1}</label></td><td>${s[0]}</td><td>${s[1]}</td><td>100</td><td>${s[3]}</td><td></td></tr>`
    : `<tr>${blank(6)}</tr>`;
}
document.getElementById('batch').innerHTML = html + '</tbody>';

// Table du moniteur
const watch = ['序号', '股票代码', '股票名称', '最新价格', '最新涨幅', '今日开盘', '昨日收盘', '今日最高', '今日最低', '今日振幅', '成交量/手数', '成交金额/万元', '是否涨停', ''];
document.getElementById('watch').innerHTML = cols([61, 70, 80, 70, 70, 70, 70, 70, 70, 70, 80, 90, 70, 0]) +
  '<thead><tr>' + watch.map((h) => `<th>${h}</th>`).join('') + '</tr></thead><tbody>' +
  `<tr>${blank(14)}</tr>`.repeat(9) + '</tbody>';

// Règles d'achat
const spin = (label, cls) => `<span class="spin tall ${cls || ''}"><input aria-label="${label}"></span>`;
const rules = [
  ['当监控列表中出现涨停时立刻执行买入, 买入个数:', null],
  ['出现涨幅≥', '%立刻买入, 买入个数:'],
  ['出现震幅≥', '%立刻买入, 买入个数:'],
  ['当成交量≥', '手立刻买入, 买入个数:'],
  ['成交金额≥', '万元立刻买入, 买入个数:']
];
document.getElementById('rules').innerHTML = rules.map(([name, tail]) => `
  <div class="rule">
    <div class="lead"><label class="opt"><input type="checkbox">${name}</label>${tail ? spin(name, 'w74') + `<span class="tail">${tail}</span>` : ''}</div>
    ${spin('个数')}<span>个, 每个买入金额</span>${spin('金额')}<span class="wan">万元</span>
    <label class="opt"><input type="checkbox">限定时间</label>
    ${spin('时')}<span class="mid">:</span>${spin('分')}<span class="mid">一</span>${spin('时')}<span class="mid">:</span>${spin('分')}<span></span>
    <label class="opt"><input type="checkbox">禁止重复买</label>
    <span class="count">0/0</span><button class="btn">清买</button>
  </div>`).join('');

// Flèches effilées : départ, pointe, épaisseur
const arrows = [
  [371, 108, 949, 50, 6],
  [353, 142, 964, 568, 7],
  [76, 150, 61, 414, 9],
  [164, 148, 349, 469, 9],
  [188, 605, 279, 605, 7],
  [203, 687, 288, 632, 8],
  [516, 540, 403, 580, 8],
  [536, 587, 309, 831, 8],
  [550, 828, 724, 568, 9],
  [103, 833, 218, 836, 8]
];
const marks = document.getElementById('marks');
arrows.forEach(([x1, y1, x2, y2, w]) => {
  const len = Math.hypot(x2 - x1, y2 - y1);
  const ux = (x2 - x1) / len;
  const uy = (y2 - y1) / len;
  const at = (d, s) => `${(x1 + ux * d - uy * s).toFixed(1)},${(y1 + uy * d + ux * s).toFixed(1)}`;
  const neck = len - w * 2;
  const poly = document.createElementNS('http://www.w3.org/2000/svg', 'polygon');
  poly.setAttribute('points', [at(0, -0.7), at(neck, -w / 2), at(neck - 2, -w), at(len, 0), at(neck - 2, w), at(neck, w / 2), at(0, 0.7)].join(' '));
  marks.appendChild(poly);
});
```
